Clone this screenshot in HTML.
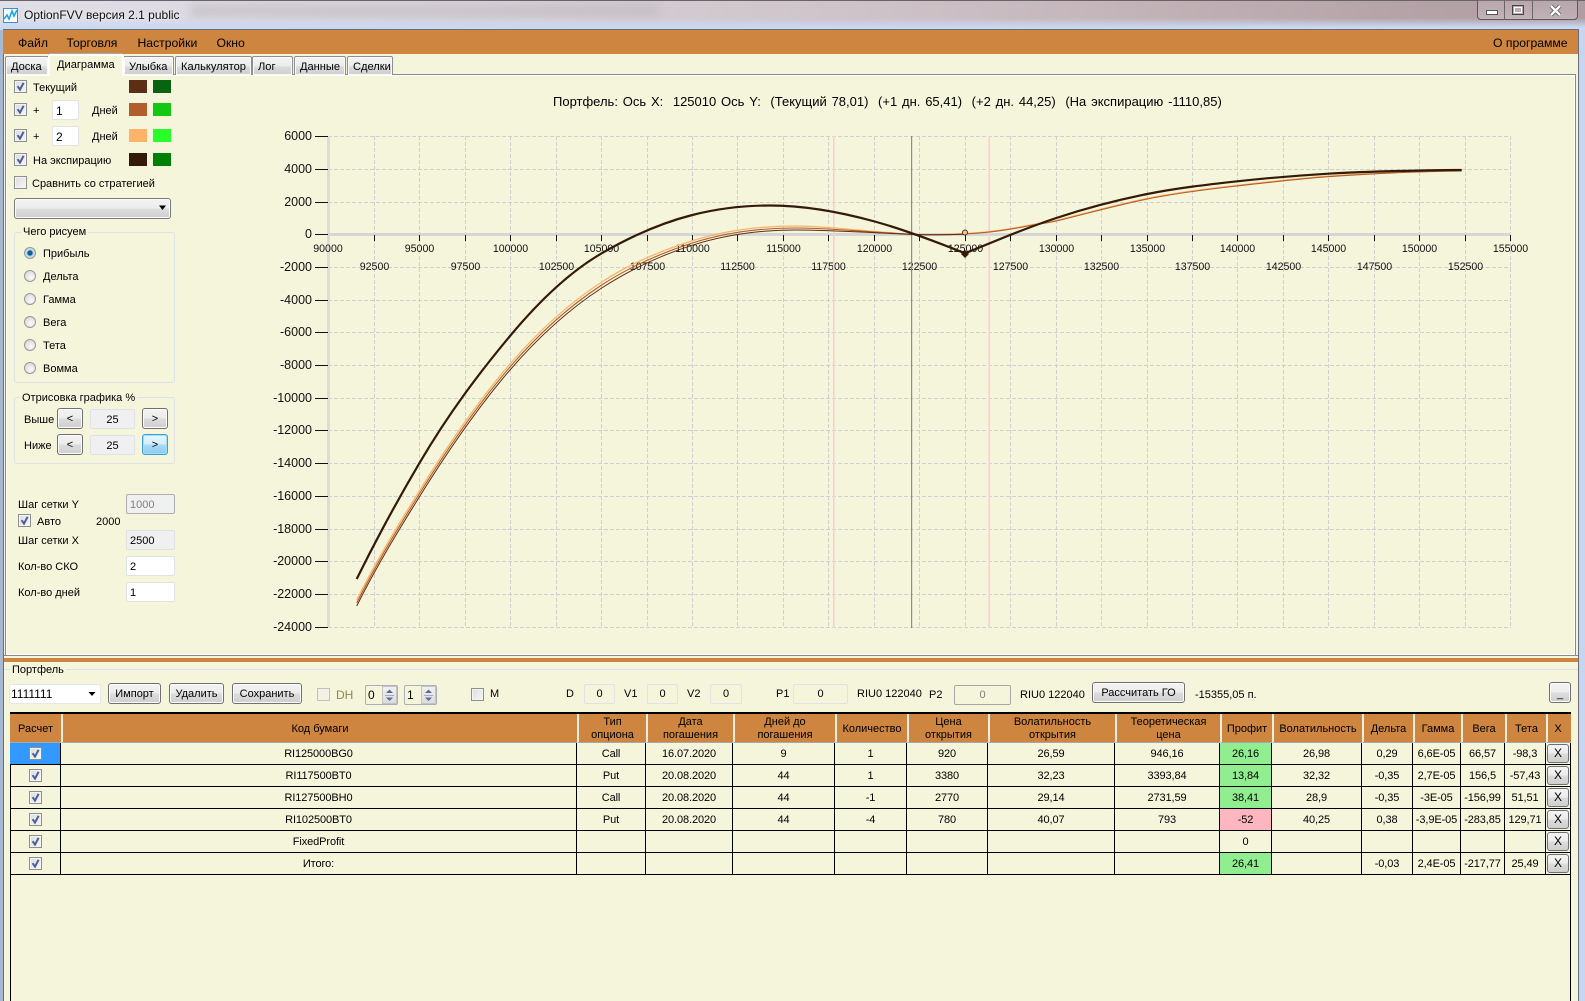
<!DOCTYPE html>
<html lang="ru"><head><meta charset="utf-8"><title>OptionFVV</title>
<style>
html,body{margin:0;padding:0;width:1585px;height:1001px;overflow:hidden;background:#f5f5dc}
body{position:relative;font:11px/14px "Liberation Sans","Noto Sans CJK SC",sans-serif;color:#000}
.a,.t,.cb,.r,.b,.i,.sw,.g,.tab{position:absolute;box-sizing:border-box}
.t{white-space:nowrap}
.sw{width:18px;height:13px}
.cb{width:13px;height:13px;border:1px solid #8e8f8f;background:linear-gradient(135deg,#dcdcdc,#f6f6f6);box-shadow:inset 0 0 0 1px #f4f4f4}
.cb svg{position:absolute;left:0;top:0;width:11px;height:11px}
.r{width:12px;height:12px;border-radius:50%;border:1px solid #989898;background:radial-gradient(circle at 60% 65%,#fafafa,#d2d2d2)}
.b{border:1px solid #707070;border-radius:3px;background:linear-gradient(#f3f3f3 0,#ececec 48%,#dcdcdc 52%,#cfcfcf 100%);text-align:center;box-shadow:inset 0 0 0 1px #fbfbfb;white-space:nowrap}
.i{border:1px solid #dfe3e8;border-radius:2px;background:#fff;white-space:nowrap;padding-left:3px}
.gr{background:#f0f0f0}
.g{border:1px solid #dde2e6;border-radius:3px}
.gl{position:absolute;background:#f5f5dc;padding:0 2px;white-space:nowrap;line-height:14px}
.tab{top:56px;height:19px;border:1px solid #8d8d8d;border-bottom:0;border-radius:2px 2px 0 0;background:linear-gradient(#f3f3f3,#ececec 50%,#dadada 55%,#cfcfcf);box-shadow:inset 0 0 0 1px #fafafa;padding-left:5px;line-height:21px;font-size:11.1px;white-space:nowrap}
.m{font-size:12.2px}
table{position:absolute;left:10px;top:714px;border-collapse:separate;border-spacing:0;table-layout:fixed;width:1561px}
th{height:29px;background:#cd853f;font-weight:400;font-size:11px;line-height:13px;text-align:center;padding:2px 0 0;border-left:2px solid #eceee0;border-bottom:1px solid #a8a8a8;box-sizing:border-box;overflow:hidden}
th:first-child{border-left:0}
td{height:22px;box-sizing:border-box;border-right:1px solid #000;border-bottom:1px solid #000;text-align:center;padding:0;font-size:11px;letter-spacing:-.1px;position:relative;white-space:nowrap}
.gn{background:#90ee90}.pk{background:#ffb6c1}
td .cb{left:19px;top:4px}
td .x{position:absolute;left:1px;top:1px;width:22px;height:19px;line-height:17px;border:1px solid #707070;border-radius:3px;background:linear-gradient(#f3f3f3,#ececec 48%,#dcdcdc 52%,#cfcfcf);box-sizing:border-box;font-size:12px}
</style></head><body>
<svg width="0" height="0" style="position:absolute"><defs><symbol id="ck" viewBox="0 0 11 11"><path d="M2.6 5.2L5 8.6L8.6 1.8" fill="none" stroke="#4a5f9a" stroke-width="2"/></symbol></defs></svg>

<!-- window chrome -->
<div class="a" style="left:0;top:0;width:1585px;height:1001px;background:#c6d6ee"></div>
<div class="a" style="left:0;top:0;width:1585px;height:30px;background:linear-gradient(90deg,#dfdfe8,#d8d3da 30%,#cbbfc4 60%,#b6a3a8 88%,#b09da3)"></div>
<div class="a" style="left:190px;top:5px;width:470px;height:12px;background:#bdb6bc;filter:blur(5px);opacity:.6"></div>
<div class="a" style="left:0;top:18px;width:1585px;height:12px;background:linear-gradient(rgba(198,214,240,0),#c9d9f2 80%)"></div>
<div class="a" style="left:0;top:0;width:1585px;height:1px;background:#6a6468"></div>
<div class="a" style="left:0;top:30px;width:3px;height:971px;background:#a9b8d2"></div>
<div class="a" style="left:3px;top:29px;width:1576px;height:972px;border:1px solid #6c6c78;border-bottom:0;background:#f5f5dc;box-sizing:border-box"></div>
<svg class="a" style="left:3px;top:8px" width="16" height="15" viewBox="0 0 16 15"><rect x=".5" y=".5" width="14" height="14" fill="#fff" stroke="#3a8fd8"/><path d="M1 11L4 7L6 11L9 3L11 8L14 2" fill="none" stroke="#18a8e8" stroke-width="1.6"/></svg>
<div class="t" style="left:24px;top:8px;font-size:12px;color:#111;text-shadow:0 0 4px #fff">OptionFVV версия 2.1 public</div>
<div class="a" style="left:1477px;top:-1px;width:101px;height:21px;border:1px solid #5d585c;border-radius:0 0 4px 4px;box-sizing:border-box;background:linear-gradient(rgba(255,255,255,.08),rgba(255,255,255,.2))"></div>
<div class="a" style="left:1504px;top:0;width:1px;height:20px;background:#6d676b"></div>
<div class="a" style="left:1532px;top:0;width:1px;height:20px;background:#6d676b"></div>
<svg class="a" style="left:1480px;top:0" width="98" height="20"><rect x="6.5" y="10.5" width="11" height="4" fill="#fff" stroke="#555"/><rect x="32.5" y="5.5" width="11" height="9" fill="none" stroke="#444" stroke-width="1"/><rect x="34.5" y="7.5" width="7" height="5" fill="none" stroke="#fff"/><path d="M71 6L80 15M80 6L71 15" stroke="#555" stroke-width="4"/><path d="M71 6L80 15M80 6L71 15" stroke="#fff" stroke-width="2.4"/></svg>

<!-- menu -->
<div class="a" style="left:3px;top:30px;width:1575px;height:24px;background:#cd853f"></div>
<div class="t m" style="left:18px;top:36px">Файл</div>
<div class="t m" style="left:66.5px;top:36px">Торговля</div>
<div class="t m" style="left:137.5px;top:36px">Настройки</div>
<div class="t m" style="left:216.5px;top:36px">Окно</div>
<div class="t m" style="left:1493px;top:36px">О программе</div>

<!-- tab panel -->
<div class="a" style="left:5px;top:74px;width:1571px;height:582px;border:1px solid #8a8a8a;box-shadow:inset 0 0 0 1px #fff;box-sizing:border-box"></div>
<div class="tab" style="left:5px;width:44px">Доска</div>
<div class="tab" style="left:123px;width:51px">Улыбка</div>
<div class="tab" style="left:175px;width:77px">Калькулятор</div>
<div class="tab" style="left:252px;width:41px">Лог</div>
<div class="tab" style="left:294px;width:52px">Данные</div>
<div class="tab" style="left:347px;width:46px">Сделки</div>
<div class="tab" style="left:48px;top:54px;width:76px;height:22px;background:#f5f5dc;border:2px solid #fff;border-bottom:0;box-shadow:0 -1px 0 #aaa;padding-left:7px;line-height:19px;z-index:2">Диаграмма</div>

<!-- left controls -->
<div class="cb" style="left:14px;top:80px"><svg><use href="#ck"/></svg></div>
<div class="t" style="left:33px;top:81px">Текущий</div>
<div class="sw" style="left:129px;top:80px;background:#5c2e14"></div><div class="sw" style="left:153px;top:80px;background:#0a640f"></div>
<div class="cb" style="left:14px;top:103px"><svg><use href="#ck"/></svg></div>
<div class="t" style="left:33px;top:104px">+</div>
<div class="i" style="left:52px;top:100px;width:27px;height:20px;line-height:20px;font-size:12px;padding-left:3px">1</div>
<div class="t" style="left:92px;top:104px">Дней</div>
<div class="sw" style="left:129px;top:103px;background:#b05e2b"></div><div class="sw" style="left:153px;top:103px;background:#13c813"></div>
<div class="cb" style="left:14px;top:129px"><svg><use href="#ck"/></svg></div>
<div class="t" style="left:33px;top:130px">+</div>
<div class="i" style="left:52px;top:126px;width:27px;height:20px;line-height:20px;font-size:12px;padding-left:3px">2</div>
<div class="t" style="left:92px;top:130px">Дней</div>
<div class="sw" style="left:129px;top:129px;background:#ffb366"></div><div class="sw" style="left:153px;top:129px;background:#28ff28"></div>
<div class="cb" style="left:14px;top:153px"><svg><use href="#ck"/></svg></div>
<div class="t" style="left:33px;top:154px">На экспирацию</div>
<div class="sw" style="left:129px;top:153px;background:#341a08"></div><div class="sw" style="left:153px;top:153px;background:#008000"></div>
<div class="cb" style="left:14px;top:176px"></div>
<div class="t" style="left:32px;top:177px">Сравнить со стратегией</div>
<div class="b" style="left:14px;top:198px;width:157px;height:21px;border-color:#7a7a7a"></div>
<svg class="a" style="left:158px;top:205px" width="10" height="6"><path d="M1 0.5H8L4.5 5Z" fill="#000"/></svg>

<div class="g" style="left:14px;top:232px;width:161px;height:151px"></div>
<div class="gl" style="left:21px;top:225px">Чего рисуем</div>
<div class="r" style="left:24px;top:247px;background:radial-gradient(circle,#0a5f9a 0,#0a5f9a 30%,#bcd4e4 45%,#e6e6e6 100%)"></div><div class="t" style="left:43px;top:247px">Прибыль</div>
<div class="r" style="left:24px;top:270px"></div><div class="t" style="left:43px;top:270px">Дельта</div>
<div class="r" style="left:24px;top:293px"></div><div class="t" style="left:43px;top:293px">Гамма</div>
<div class="r" style="left:24px;top:316px"></div><div class="t" style="left:43px;top:316px">Вега</div>
<div class="r" style="left:24px;top:339px"></div><div class="t" style="left:43px;top:339px">Тета</div>
<div class="r" style="left:24px;top:362px"></div><div class="t" style="left:43px;top:362px">Вомма</div>

<div class="g" style="left:14px;top:397px;width:161px;height:67px"></div>
<div class="gl" style="left:20px;top:391px">Отрисовка графика %</div>
<div class="t" style="left:24px;top:413px">Выше</div>
<div class="b" style="left:57px;top:408px;width:26px;height:21px;line-height:21px">&lt;</div>
<div class="i gr" style="left:90px;top:409px;width:45px;height:20px;line-height:20px;text-align:center;padding:0">25</div>
<div class="b" style="left:142px;top:408px;width:26px;height:21px;line-height:21px">&gt;</div>
<div class="t" style="left:24px;top:439px">Ниже</div>
<div class="b" style="left:57px;top:434px;width:26px;height:21px;line-height:21px">&lt;</div>
<div class="i gr" style="left:90px;top:435px;width:45px;height:20px;line-height:20px;text-align:center;padding:0">25</div>
<div class="b" style="left:142px;top:434px;width:26px;height:21px;line-height:21px;border-color:#3c9fd8;background:linear-gradient(#e8f6fd,#d4eefc 48%,#a8daf6 52%,#8cccf2);box-shadow:inset 0 0 0 1px #9fe0f8">&gt;</div>

<div class="t" style="left:18px;top:498px">Шаг сетки Y</div>
<div class="i gr" style="left:126px;top:494px;width:49px;height:20px;line-height:20px;border-color:#abadb3;color:#808080">1000</div>
<div class="cb" style="left:18px;top:514px"><svg><use href="#ck"/></svg></div>
<div class="t" style="left:37px;top:515px">Авто</div>
<div class="t" style="left:96px;top:515px">2000</div>
<div class="t" style="left:18px;top:534px">Шаг сетки X</div>
<div class="i gr" style="left:126px;top:530px;width:49px;height:20px;line-height:20px">2500</div>
<div class="t" style="left:18px;top:560px">Кол-во СКО</div>
<div class="i" style="left:126px;top:556px;width:49px;height:20px;line-height:20px">2</div>
<div class="t" style="left:18px;top:586px">Кол-во дней</div>
<div class="i" style="left:126px;top:582px;width:49px;height:20px;line-height:20px">1</div>

<!-- chart -->
<div class="t" style="left:553px;top:95px;font-size:13px;word-spacing:1.2px">Портфель: Ось X:&nbsp; 125010 Ось Y:&nbsp; (Текущий 78,01)&nbsp; (+1 дн. 65,41)&nbsp; (+2 дн. 44,25)&nbsp; (На экспирацию -1110,85)</div>
<svg class="a" style="left:0;top:0" width="1585" height="660" font-family="Liberation Sans, sans-serif">
<path fill="none" stroke="#cfcfcf" stroke-dasharray="4 2" d="M374.5 136V627M419.5 136V627M465.5 136V627M510.5 136V627M556.5 136V627M601.5 136V627M647.5 136V627M692.5 136V627M737.5 136V627M783.5 136V627M828.5 136V627M874.5 136V627M919.5 136V627M965.5 136V627M1010.5 136V627M1056.5 136V627M1101.5 136V627M1147.5 136V627M1192.5 136V627M1237.5 136V627M1283.5 136V627M1328.5 136V627M1374.5 136V627M1419.5 136V627M1465.5 136V627M1510.5 136V627M328 136.5H1511M328 169.5H1511M328 202.5H1511M328 267.5H1511M328 300.5H1511M328 332.5H1511M328 365.5H1511M328 398.5H1511M328 430.5H1511M328 463.5H1511M328 496.5H1511M328 529.5H1511M328 561.5H1511M328 594.5H1511M328 627.5H1511"/>
<rect x="327" y="136" width="3" height="492" fill="#dcdcdc"/>
<rect x="328" y="233" width="1183" height="3" fill="#d6d6d6"/>
<path stroke="#111" d="M315 136.5H328M315 169.5H328M315 202.5H328M315 234.5H328M315 267.5H328M315 300.5H328M315 332.5H328M315 365.5H328M315 398.5H328M315 430.5H328M315 463.5H328M315 496.5H328M315 529.5H328M315 561.5H328M315 594.5H328M315 627.5H328"/>
<path stroke="#111" d="M374.5 235V241M419.5 235V241M465.5 235V241M510.5 235V241M556.5 235V241M601.5 235V241M647.5 235V241M692.5 235V241M737.5 235V241M783.5 235V241M828.5 235V241M874.5 235V241M919.5 235V241M965.5 235V241M1010.5 235V241M1056.5 235V241M1101.5 235V241M1147.5 235V241M1192.5 235V241M1237.5 235V241M1283.5 235V241M1328.5 235V241M1374.5 235V241M1419.5 235V241M1465.5 235V241M1510.5 235V241"/>
<g font-size="12.5" text-anchor="end" fill="#111">
<text x="312" y="140">6000</text><text x="312" y="173">4000</text><text x="312" y="206">2000</text><text x="312" y="238">0</text><text x="312" y="271">-2000</text><text x="312" y="304">-4000</text><text x="312" y="336">-6000</text><text x="312" y="369">-8000</text><text x="312" y="402">-10000</text><text x="312" y="434">-12000</text><text x="312" y="467">-14000</text><text x="312" y="500">-16000</text><text x="312" y="533">-18000</text><text x="312" y="565">-20000</text><text x="312" y="598">-22000</text><text x="312" y="631">-24000</text>
</g>
<g font-size="10.6" text-anchor="middle" fill="#111">
<text x="328" y="252">90000</text><text x="419.5" y="252">95000</text><text x="510.5" y="252">100000</text><text x="601.5" y="252">105000</text><text x="692.5" y="252">110000</text><text x="783.5" y="252">115000</text><text x="874.5" y="252">120000</text><text x="965.5" y="252">125000</text><text x="1056.5" y="252">130000</text><text x="1147.5" y="252">135000</text><text x="1237.5" y="252">140000</text><text x="1328.5" y="252">145000</text><text x="1419.5" y="252">150000</text><text x="1510.5" y="252">155000</text>
<text x="374.5" y="270">92500</text><text x="465.5" y="270">97500</text><text x="556.5" y="270">102500</text><text x="647.5" y="270">107500</text><text x="737.5" y="270">112500</text><text x="828.5" y="270">117500</text><text x="919.5" y="270">122500</text><text x="1010.5" y="270">127500</text><text x="1101.5" y="270">132500</text><text x="1192.5" y="270">137500</text><text x="1283.5" y="270">142500</text><text x="1374.5" y="270">147500</text><text x="1465.5" y="270">152500</text>
</g>
<rect x="833" y="136" width="1.6" height="492" fill="#fbcfcf"/>
<rect x="988.4" y="136" width="1.6" height="492" fill="#fbcfcf"/>
<rect x="911" y="136" width="1.2" height="492" fill="#8a8a90"/>
<g fill="none" stroke-linejoin="round">
<path stroke="#ffb366" stroke-width="1.3" d="M356.7 600C377.6 558.3 398.4 524.6 419.3 491C449.5 442.3 479.8 399.1 510 364C540.6 328.5 571.1 301.9 601.7 282C631.9 262.4 662.1 250.5 692.3 240.8C726.5 230 760.8 226 795 226C821.6 226 848.1 229.5 874.7 231.5C888.7 232.5 902.7 234.1 916.7 234.5C932.8 235 948.9 234.4 965 233.5C986 232.5 1007 229.6 1028 225.4C1037.4 223.5 1046.9 222.7 1056.3 220.4C1086.6 213.1 1117 204.5 1147.3 198.4C1177.2 192.4 1207.1 188.7 1237 185.4C1267.3 182.1 1297.7 178.2 1328 176.1C1372.6 173 1417.1 170.8 1461.7 170.4"/>
<path stroke="#b05e2b" stroke-width="1.1" d="M356.7 603C377.6 561.3 398.4 527.6 419.3 494C449.5 445.3 479.8 402.1 510 367C540.6 331.5 571.1 304.9 601.7 285C631.9 265.4 662.1 252.7 692.3 243C726.5 232.1 760.8 228 795 228C821.6 228 848.1 230.4 874.7 232C888.7 232.8 902.7 234.1 916.7 234.5C932.8 235 948.9 234.8 965 234C986 233 1007 230.2 1028 226C1037.4 224.1 1046.9 223.3 1056.3 221C1086.6 213.7 1117 205.1 1147.3 199C1177.2 193 1207.1 189.3 1237 186C1267.3 182.7 1297.7 178.8 1328 176.7C1372.6 173.6 1417.1 171.4 1461.7 171"/>
<path stroke="#5c2e14" stroke-width="1" d="M356.7 606C377.6 564.3 398.4 530.6 419.3 497C449.5 448.3 479.8 405.1 510 370C540.6 334.5 571.1 307.9 601.7 288C631.9 268.4 662.1 254.9 692.3 245.2C726.5 234.3 760.8 230 795 230C821.6 230 848.1 231.4 874.7 232.7C888.7 233.3 902.7 234.1 916.7 234.5C932.8 235 948.9 234.8 965 234.2"/>
<path stroke="#341a08" stroke-width="2.2" d="M356.7 579C377.6 536.6 398.4 498.8 419.3 463.3C449.5 411.9 479.8 372.3 510 336C540.6 299.3 571.1 271 601.7 253.3C631.9 235.8 662.1 222.7 692.3 215C718.2 208.4 744.1 205.5 770 205.5C804.9 205.5 839.8 211.9 874.7 221.5C904.8 229.8 934.9 241.3 965 253.3L1010 235C1025.4 229 1040.9 223.1 1056.3 218C1086.6 208 1117 200.1 1147.3 194C1177.3 188 1207.3 184.6 1237.3 181.3C1267.6 178 1298 175.5 1328.3 173.7C1372.8 171 1417.2 170.4 1461.7 170"/>
</g>
<path d="M965 250L969 254L965 258L961 254Z" fill="#341a08"/>
<circle cx="965" cy="232.5" r="2.5" fill="#e8c8a8" stroke="#5c2e14"/>
</svg>

<!-- splitter and portfolio -->
<div class="a" style="left:4px;top:655px;width:1574px;height:1px;background:#8a8a8a"></div>
<div class="a" style="left:4px;top:658px;width:1574px;height:4px;background:#cd853f"></div>
<div class="a" style="left:4px;top:669px;width:1574px;height:1px;background:#dde2e6"></div>
<div class="gl" style="left:10px;top:663px">Портфель</div>

<div class="i" style="left:9px;top:684px;width:92px;height:20px;line-height:19px;font-size:12px;padding-left:1px;border-color:#e4e8ec">1111111</div>
<svg class="a" style="left:88px;top:691px" width="9" height="6"><path d="M.5 1H7.5L4 5Z" fill="#000"/></svg>
<div class="b" style="left:108px;top:683px;width:53px;height:21px;line-height:21px">Импорт</div>
<div class="b" style="left:169px;top:683px;width:55px;height:21px;line-height:21px">Удалить</div>
<div class="b" style="left:232px;top:683px;width:70px;height:21px;line-height:21px">Сохранить</div>
<div class="cb" style="left:317px;top:688px;background:#f2f2e4;border-color:#c0c0c0;box-shadow:none"></div>
<div class="t" style="left:336px;top:688px;color:#8a8a50;font-size:12px">DH</div>
<div class="i" style="left:365px;top:685px;width:33px;height:20px;line-height:18px;border-color:#a9b0b8;font-size:12px;padding-left:2px;background:#f5f5dc">0</div>
<div class="a" style="left:382px;top:686px;width:15px;height:18px;background:linear-gradient(#f0f0f0,#dcdcdc);border:1px solid #c4c4c4;box-sizing:border-box"></div>
<svg class="a" style="left:385px;top:688px" width="9" height="15"><path d="M1 5L4.5 1.5L8 5ZM1 9.5L4.5 13L8 9.5Z" fill="#5a6a9a"/><path d="M0 7.5H9" stroke="#aaa"/></svg>
<div class="i" style="left:404px;top:685px;width:33px;height:20px;line-height:18px;border-color:#a9b0b8;font-size:12px;padding-left:2px;background:#f5f5dc">1</div>
<div class="a" style="left:421px;top:686px;width:15px;height:18px;background:linear-gradient(#f0f0f0,#dcdcdc);border:1px solid #c4c4c4;box-sizing:border-box"></div>
<svg class="a" style="left:424px;top:688px" width="9" height="15"><path d="M1 5L4.5 1.5L8 5ZM1 9.5L4.5 13L8 9.5Z" fill="#5a6a9a"/><path d="M0 7.5H9" stroke="#aaa"/></svg>
<div class="cb" style="left:471px;top:688px"></div>
<div class="t" style="left:490px;top:687px">M</div>
<div class="t" style="left:566px;top:687px">D</div>
<div class="i" style="left:584px;top:684px;width:31px;height:20px;line-height:18px;text-align:center;padding:0;background:#f5f5dc">0</div>
<div class="t" style="left:624px;top:687px">V1</div>
<div class="i" style="left:647px;top:684px;width:31px;height:20px;line-height:18px;text-align:center;padding:0;background:#f5f5dc">0</div>
<div class="t" style="left:687px;top:687px">V2</div>
<div class="i" style="left:710px;top:684px;width:32px;height:20px;line-height:18px;text-align:center;padding:0;background:#f5f5dc">0</div>
<div class="t" style="left:776px;top:687px">P1</div>
<div class="i" style="left:793px;top:684px;width:55px;height:20px;line-height:18px;text-align:center;padding:0;background:#f5f5dc">0</div>
<div class="t" style="left:857px;top:687px">RIU0 122040</div>
<div class="t" style="left:929px;top:688px">P2</div>
<div class="i" style="left:954px;top:685px;width:57px;height:20px;line-height:18px;text-align:center;padding:0;background:#f5f5dc;border-color:#a8a8a8;color:#808080">0</div>
<div class="t" style="left:1020px;top:688px">RIU0 122040</div>
<div class="b" style="left:1092px;top:682px;width:93px;height:21px;line-height:20px">Рассчитать ГО</div>
<div class="t" style="left:1195px;top:688px">-15355,05 п.</div>
<div class="b" style="left:1549px;top:682px;width:22px;height:21px;line-height:22px">_</div>

<!-- grid -->
<div class="a" style="left:10px;top:712px;width:1561px;height:289px;border:solid #000;border-width:2px 1px 0 1px;box-sizing:border-box"></div>
<table>
<colgroup><col style="width:51px"><col style="width:516px"><col style="width:69px"><col style="width:87px"><col style="width:102px"><col style="width:72px"><col style="width:81px"><col style="width:127px"><col style="width:105px"><col style="width:52px"><col style="width:90px"><col style="width:51px"><col style="width:48px"><col style="width:44px"><col style="width:41px"><col style="width:25px"></colgroup>
<tr><th>Расчет</th><th>Код бумаги</th><th>Тип<br>опциона</th><th>Дата<br>погашения</th><th>Дней до<br>погашения</th><th>Количество</th><th>Цена<br>открытия</th><th>Волатильность<br>открытия</th><th>Теоретическая<br>цена</th><th>Профит</th><th>Волатильность</th><th>Дельта</th><th>Гамма</th><th>Вега</th><th>Тета</th><th style="padding-right:3px">X</th></tr>
<tr><td style="background:#3399ff"><div class="cb"><svg><use href="#ck"/></svg></div></td><td>RI125000BG0</td><td>Call</td><td>16.07.2020</td><td>9</td><td>1</td><td>920</td><td>26,59</td><td>946,16</td><td class="gn">26,16</td><td>26,98</td><td>0,29</td><td>6,6E-05</td><td>66,57</td><td>-98,3</td><td><div class="x">X</div></td></tr>
<tr><td><div class="cb"><svg><use href="#ck"/></svg></div></td><td>RI117500BT0</td><td>Put</td><td>20.08.2020</td><td>44</td><td>1</td><td>3380</td><td>32,23</td><td>3393,84</td><td class="gn">13,84</td><td>32,32</td><td>-0,35</td><td>2,7E-05</td><td>156,5</td><td>-57,43</td><td><div class="x">X</div></td></tr>
<tr><td><div class="cb"><svg><use href="#ck"/></svg></div></td><td>RI127500BH0</td><td>Call</td><td>20.08.2020</td><td>44</td><td>-1</td><td>2770</td><td>29,14</td><td>2731,59</td><td class="gn">38,41</td><td>28,9</td><td>-0,35</td><td>-3E-05</td><td>-156,99</td><td>51,51</td><td><div class="x">X</div></td></tr>
<tr><td><div class="cb"><svg><use href="#ck"/></svg></div></td><td>RI102500BT0</td><td>Put</td><td>20.08.2020</td><td>44</td><td>-4</td><td>780</td><td>40,07</td><td>793</td><td class="pk">-52</td><td>40,25</td><td>0,38</td><td>-3,9E-05</td><td>-283,85</td><td>129,71</td><td><div class="x">X</div></td></tr>
<tr><td><div class="cb"><svg><use href="#ck"/></svg></div></td><td>FixedProfit</td><td></td><td></td><td></td><td></td><td></td><td></td><td></td><td>0</td><td></td><td></td><td></td><td></td><td></td><td><div class="x">X</div></td></tr>
<tr><td><div class="cb"><svg><use href="#ck"/></svg></div></td><td>Итого:</td><td></td><td></td><td></td><td></td><td></td><td></td><td></td><td class="gn">26,41</td><td></td><td>-0,03</td><td>2,4E-05</td><td>-217,77</td><td>25,49</td><td><div class="x">X</div></td></tr>
</table>
</body></html>
